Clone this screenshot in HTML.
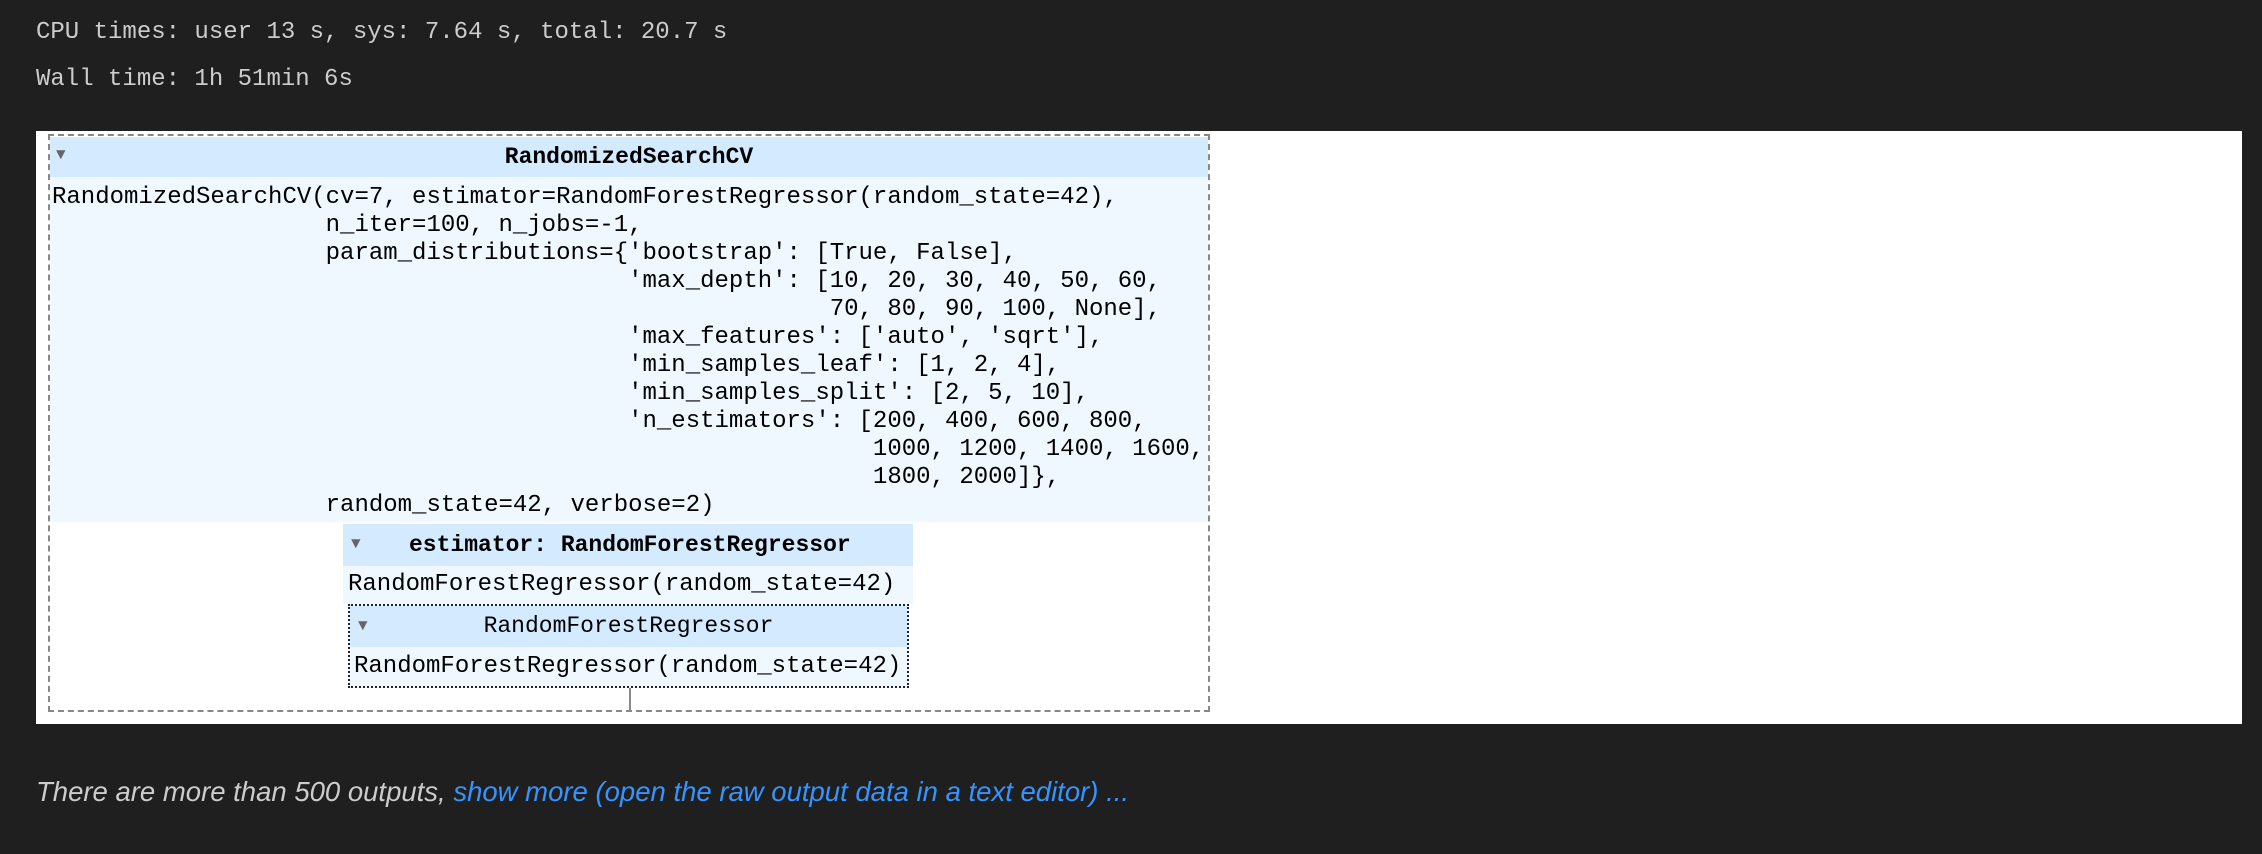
<!DOCTYPE html>
<html><head><style>
body{margin:0;width:2262px;height:854px;background:#1f1f1f;position:relative;overflow:hidden;font-family:"Liberation Mono",monospace}
.t{position:absolute;color:#cccccc;font-size:24px;left:36px;white-space:pre}
.panel{position:absolute;left:36px;top:131px;width:2206px;height:593px;background:#fff}
.ab{position:absolute;box-sizing:border-box}
.hd{position:absolute;background:#d4ebff;color:#000;font-size:23px;white-space:pre}
.bd{position:absolute;background:#f0f8ff;color:#000;font-size:24px;white-space:pre;line-height:28px}
.tri{position:absolute;color:#666;font-size:16px}
</style></head><body>
<div class="t" style="top:19px">CPU times: user 13 s, sys: 7.64 s, total: 20.7 s</div>
<div class="t" style="top:66px">Wall time: 1h 51min 6s</div>
<div class="panel"></div>
<div class="ab" style="left:48px;top:134px;width:1162px;height:578px;border:2px dashed #888"></div>
<div class="hd" style="left:50px;top:137px;width:1158px;height:40px;line-height:40px;text-align:center;font-weight:bold">RandomizedSearchCV</div>
<div class="tri" style="left:56px;top:146px">▼</div>
<div class="bd" style="left:50px;top:177px;width:1158px;height:345px;padding-top:7px;box-sizing:border-box;padding-left:2px">RandomizedSearchCV(cv=7, estimator=RandomForestRegressor(random_state=42),
                   n_iter=100, n_jobs=-1,
                   param_distributions={'bootstrap': [True, False],
                                        'max_depth': [10, 20, 30, 40, 50, 60,
                                                      70, 80, 90, 100, None],
                                        'max_features': ['auto', 'sqrt'],
                                        'min_samples_leaf': [1, 2, 4],
                                        'min_samples_split': [2, 5, 10],
                                        'n_estimators': [200, 400, 600, 800,
                                                         1000, 1200, 1400, 1600,
                                                         1800, 2000]},
                   random_state=42, verbose=2)</div>
<div class="hd" style="left:343px;top:524px;width:570px;height:42px;line-height:42px;font-weight:bold;padding-left:66px;box-sizing:border-box">estimator: RandomForestRegressor</div>
<div class="tri" style="left:351px;top:535px">▼</div>
<div class="bd" style="left:343px;top:566px;width:570px;height:38px;line-height:38px;padding-left:5px;box-sizing:border-box">RandomForestRegressor(random_state=42)</div>
<div class="ab" style="left:629px;top:688px;width:2px;height:23px;background:#888"></div>
<div class="ab" style="left:348px;top:604px;width:561px;height:84px;border:2px dotted #222;background:#f0f8ff"></div>
<div class="hd" style="left:350px;top:606px;width:557px;height:41px;line-height:41px;text-align:center">RandomForestRegressor</div>
<div class="tri" style="left:358px;top:617px">▼</div>
<div class="bd" style="left:350px;top:647px;width:557px;height:39px;line-height:39px;padding-left:4px;box-sizing:border-box;background:transparent">RandomForestRegressor(random_state=42)</div>
<div style="position:absolute;left:36px;top:776px;font-family:'Liberation Sans',sans-serif;font-style:italic;font-size:27.5px;color:#cccccc;white-space:pre">There are more than 500 outputs, <span style="color:#3794ff">show more (open the raw output data in a text editor) ...</span></div>
</body></html>
